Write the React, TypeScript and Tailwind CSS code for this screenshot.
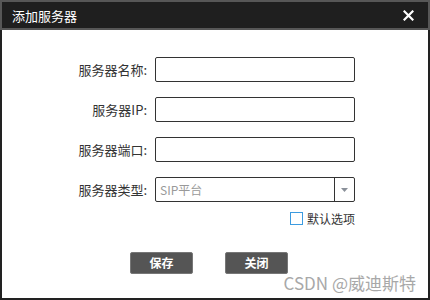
import React from "react";

const font = { fontFamily: '"Noto Sans CJK SC", "Noto Sans", sans-serif' };

function Field({ label }: { label: string }) {
  return (
    <div className="flex items-center h-[25px]">
      <div className="w-[145px] text-right text-[13px] text-[#333]">{label}</div>
      <div className="ml-[8px] w-[200px] h-[25px] border border-[#333] rounded-[2px] bg-white" />
    </div>
  );
}

export default function App() {
  return (
    <div className="w-[430px] h-[300px] flex flex-col relative bg-white" style={font}>
      {/* title bar */}
      <div className="h-[30px] flex-shrink-0 border-2 border-[#575757] bg-[#1f1f1f] flex items-center justify-between pl-[10px] pr-[14px]">
        <span className="text-white text-[13px] leading-none">添加服务器</span>
        <svg width="11" height="11" viewBox="0 0 11 11">
          <path d="M1.5 1.5l8 8M9.5 1.5l-8 8" stroke="#fff" strokeWidth="2.2" strokeLinecap="square" />
        </svg>
      </div>

      {/* body */}
      <div className="flex-1 bg-white border-x-2 border-b-2 border-[#222] flex flex-col pt-[27px]">
        <div className="flex flex-col gap-[15px]">
          <Field label="服务器名称:" />
          <Field label="服务器IP:" />
          <Field label="服务器端口:" />
          <div className="flex items-center h-[25px]">
            <div className="w-[145px] text-right text-[13px] text-[#333]">服务器类型:</div>
            <div className="ml-[8px] w-[200px] h-[25px] border border-[#333] rounded-[2px] bg-white flex">
              <div className="flex-1 flex items-center pl-[4px] text-[12px] text-[#999]">SIP平台</div>
              <div className="w-[20px] border-l border-[#333] flex items-center justify-center">
                <svg width="7" height="4" viewBox="0 0 7 4">
                  <path d="M0 0h7L3.5 4z" fill="#8a9099" />
                </svg>
              </div>
            </div>
          </div>
        </div>

        <div className="flex items-center justify-end w-[353px] mt-[10px] gap-[4px]">
          <div className="w-[13px] h-[13px] border border-[#3c9be0] bg-white" />
          <span className="text-[12px] text-[#333] leading-none">默认选项</span>
        </div>

        <div className="flex pl-[128px] gap-[32px] mt-[27px]">
          <button className="w-[63px] h-[22px] rounded-[2px] bg-[#555] border border-[#777] text-white text-[12px] font-bold leading-none">
            保存
          </button>
          <button className="w-[63px] h-[22px] rounded-[2px] bg-[#555] border border-[#777] text-white text-[12px] font-bold leading-none">
            关闭
          </button>
        </div>
      </div>

      {/* watermark */}
      <div className="absolute right-[14px] bottom-[9px] text-[17px] text-[#a8a8a8] leading-none">
        CSDN @威迪斯特
      </div>
    </div>
  );
}
